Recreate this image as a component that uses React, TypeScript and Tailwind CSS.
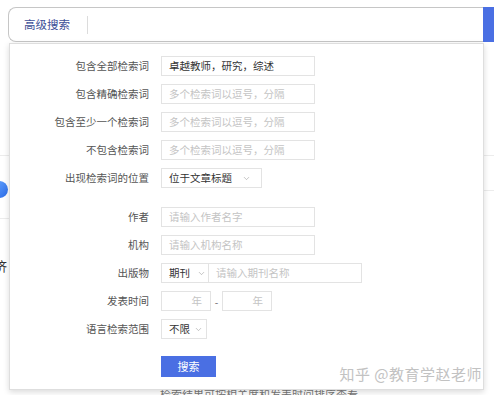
import { ChevronDown } from "lucide-react"

const cjk = { fontFamily: '"Noto Sans CJK SC", "Liberation Sans", sans-serif' }

function Label({ children }: { children: React.ReactNode }) {
  return <div className="w-[139px] text-right text-[10.5px] text-[#555] whitespace-nowrap">{children}</div>
}

function TextBox({ value, placeholder, w = "w-[154px]" }: { value?: string; placeholder?: string; w?: string }) {
  return (
    <div className={`${w} h-[20px] border border-[#e3e3e3] flex items-center pl-[7px] text-[10.5px] whitespace-nowrap`}>
      {value ? <span className="text-[#333]">{value}</span> : <span className="text-[#c4c4c4]">{placeholder}</span>}
    </div>
  )
}

function Select({ text, w, gap = "gap-[7px]" }: { text: string; w: string; gap?: string }) {
  return (
    <div className={`${w} h-[20px] border border-[#e3e3e3] flex items-center pl-[7px] ${gap} text-[10.5px] text-[#333] whitespace-nowrap`}>
      <span>{text}</span>
      <ChevronDown className="shrink-0 w-[9px] h-[9px] text-[#999]" strokeWidth={1.5} />
    </div>
  )
}

function Row({ label, children }: { label: string; children: React.ReactNode }) {
  return (
    <div className="flex items-center h-[20px] gap-[12px]">
      <Label>{label}</Label>
      {children}
    </div>
  )
}

export default function App() {
  return (
    <div className="relative w-[494px] h-[395px] overflow-hidden bg-white" style={cjk}>
      {/* page content behind the dropdown */}
      <div className="absolute left-0 top-[155px] w-[10px] h-px bg-[#ececec]" />
      <div className="absolute left-0 top-[218px] w-[10px] h-px bg-[#ececec]" />
      <div className="absolute right-0 top-[155px] w-[12px] h-px bg-[#ececec]" />
      <div className="absolute right-0 top-[190px] w-[12px] h-px bg-[#ececec]" />
      <div className="absolute left-[-9px] top-[181px] w-[17px] h-[17px] rounded-full bg-gradient-to-br from-[#6aa8ff] to-[#2a6ae8]" />
      <div className="absolute left-[-6px] top-[256px] text-[13px] text-[#333]">济</div>
      <div className="absolute left-[160px] top-[386px] text-[11px] text-[#777]">检索结果可按相关度和发表时间排序查看</div>

      {/* search bar */}
      <div className="relative flex pt-[7px] pl-[8px] h-[42px]">
        <div className="flex-1 flex items-center border border-[#c6c6c6] border-r-0 rounded-l-[8px] bg-white">
          <span className="pl-[15px] text-[11.5px] text-[#3c4f97]">高级搜索</span>
          <div className="ml-[17px] w-px h-[18px] bg-[#dcdcdc]" />
        </div>
        <div className="w-[11px] bg-[#4a6fe3]" />
      </div>

      {/* advanced search dropdown */}
      <div className="absolute left-[9px] top-[43px] w-[475px] h-[347px] bg-white border border-[#dedede] shadow-[0_2px_6px_rgba(0,0,0,0.15)] pt-[12px]">
        <div className="flex flex-col gap-[8px]">
          <Row label="包含全部检索词"><TextBox value="卓越教师，研究，综述" /></Row>
          <Row label="包含精确检索词"><TextBox placeholder="多个检索词以逗号，分隔" /></Row>
          <Row label="包含至少一个检索词"><TextBox placeholder="多个检索词以逗号，分隔" /></Row>
          <Row label="不包含检索词"><TextBox placeholder="多个检索词以逗号，分隔" /></Row>
          <Row label="出现检索词的位置"><Select text="位于文章标题" w="w-[101px]" gap="gap-[10px]" /></Row>
        </div>

        <div className="flex flex-col gap-[8px] mt-[19px]">
          <Row label="作者"><TextBox placeholder="请输入作者名字" /></Row>
          <Row label="机构"><TextBox placeholder="请输入机构名称" /></Row>
          <Row label="出版物">
            <div className="flex">
              <Select text="期刊" w="w-[48px]" />
              <div className="-ml-px"><TextBox placeholder="请输入期刊名称" w="w-[154px]" /></div>
            </div>
          </Row>
          <Row label="发表时间">
            <div className="flex items-center">
              <div className="w-[50px] h-[20px] border border-[#e3e3e3] flex items-center justify-end pr-[8px] text-[10.5px] text-[#c4c4c4]">年</div>
              <span className="w-[11px] text-center text-[10px] text-[#666]">-</span>
              <div className="w-[50px] h-[20px] border border-[#e3e3e3] flex items-center justify-end pr-[8px] text-[10.5px] text-[#c4c4c4]">年</div>
            </div>
          </Row>
          <Row label="语言检索范围"><Select text="不限" w="w-[46px]" gap="gap-[4px]" /></Row>
        </div>

        <div className="flex mt-[17px] pl-[151px]">
          <button className="w-[55px] h-[21px] bg-[#4a6fe3] text-white text-[11px]">搜索</button>
        </div>

        <div className="absolute right-[1px] bottom-[4px] text-[15px] text-[#c2c2c2] tracking-[0.5px] whitespace-nowrap">知乎 @教育学赵老师</div>
      </div>
    </div>
  )
}
